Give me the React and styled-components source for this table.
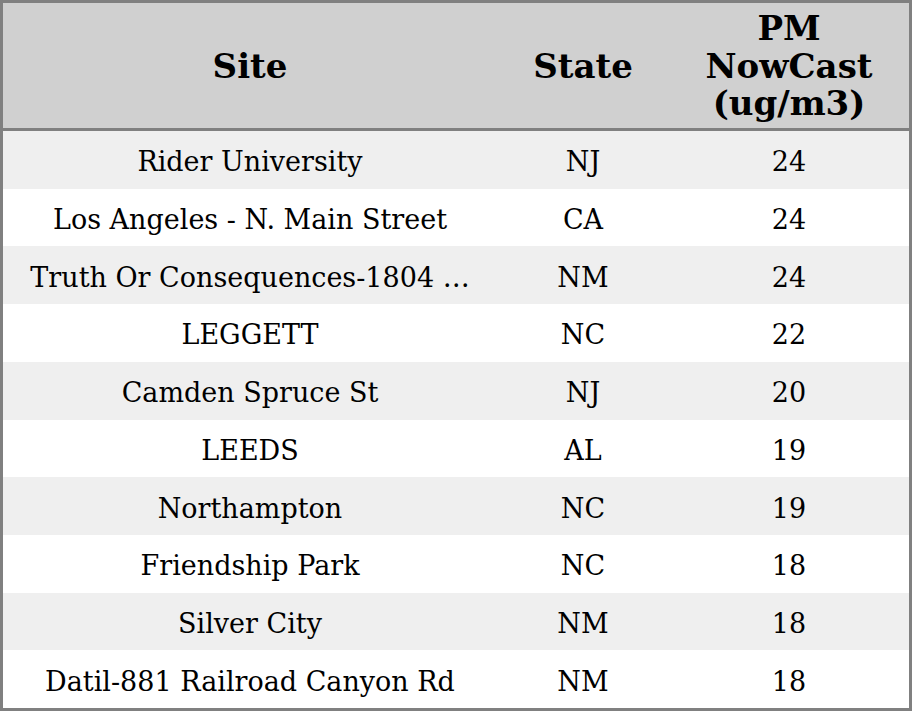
import React from "react";
import styled, { createGlobalStyle } from "styled-components";

const GlobalStyle = createGlobalStyle`
  html, body {
    margin: 0;
    padding: 0;
  }
  body {
    font-family: "DejaVu Serif", "Liberation Serif", serif;
    color: #000;
  }
`;

const Table = styled.div`
  box-sizing: border-box;
  width: 100vw;
  height: 100vh;
  border: 3px solid #808080;
  display: flex;
  flex-direction: column;
  background: #fff;
`;

const Row = styled.div`
  display: grid;
  grid-template-columns: 494px 172px 1fr;
  align-items: center;
  flex: 1;
  background: ${(p) => (p.$shaded ? "#efefef" : "#ffffff")};
`;

const HeadRow = styled(Row)`
  flex: 0 0 125px;
  background: #d0d0d0;
  border-bottom: 3px solid #808080;
`;

const HeadCell = styled.div`
  text-align: center;
  font-weight: bold;
  font-size: 34px;
  line-height: 37.5px;
  padding-top: 2px;
`;

const Cell = styled.div`
  text-align: center;
  font-size: 27px;
  white-space: nowrap;
  overflow: hidden;
  padding-top: 4px;
`;

const rows = [
  ["Rider University", "NJ", 24],
  ["Los Angeles - N. Main Street", "CA", 24],
  ["Truth Or Consequences-1804 …", "NM", 24],
  ["LEGGETT", "NC", 22],
  ["Camden Spruce St", "NJ", 20],
  ["LEEDS", "AL", 19],
  ["Northampton", "NC", 19],
  ["Friendship Park", "NC", 18],
  ["Silver City", "NM", 18],
  ["Datil-881 Railroad Canyon Rd", "NM", 18],
];

const App = () => {
  return (
    <>
      <GlobalStyle />
      <Table>
        <HeadRow>
          <HeadCell>Site</HeadCell>
          <HeadCell>State</HeadCell>
          <HeadCell>
            PM
            <br />
            NowCast
            <br />
            (ug/m3)
          </HeadCell>
        </HeadRow>
        {rows.map(([site, state, value], i) => (
          <Row key={site} $shaded={i % 2 === 0}>
            <Cell>{site}</Cell>
            <Cell>{state}</Cell>
            <Cell>{value}</Cell>
          </Row>
        ))}
      </Table>
    </>
  );
};

export default App;
